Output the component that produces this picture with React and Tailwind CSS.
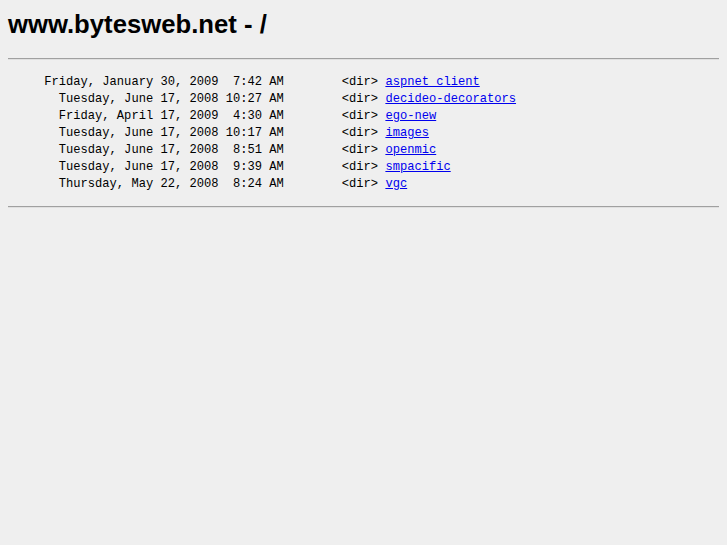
const entries = [
  ["Friday, January 30, 2009", "7:42 AM", "aspnet_client"],
  ["Tuesday, June 17, 2008", "10:27 AM", "decideo-decorators"],
  ["Friday, April 17, 2009", "4:30 AM", "ego-new"],
  ["Tuesday, June 17, 2008", "10:17 AM", "images"],
  ["Tuesday, June 17, 2008", "8:51 AM", "openmic"],
  ["Tuesday, June 17, 2008", "9:39 AM", "smpacific"],
  ["Thursday, May 22, 2008", "8:24 AM", "vgc"],
];

export default function App() {
  return (
    <div className="min-h-[545px] bg-[#efefef] p-2 text-black">
      <h1 className="font-['Liberation_Sans',Arial,sans-serif] text-[25.7px] font-bold leading-[30px] pt-[1px] pb-[19px]">
        www.bytesweb.net - /
      </h1>
      <hr className="border-0 border-t border-t-[#a0a0a0] border-b border-b-[#e0e0e0]" />
      <pre className="font-['Liberation_Mono','Courier_New',monospace] text-[12.1px] leading-[17px] pt-[14px] pb-[13px]">
        {entries.map(([date, time, name]) => (
          <div key={name}>
            {date.padStart(29, " ") + " " + time.padStart(8, " ") + "        <dir> "}
            <a href="#" className="text-[#0000ee] underline">
              {name}
            </a>
          </div>
        ))}
      </pre>
      <hr className="border-0 border-t border-t-[#a0a0a0] border-b border-b-[#e0e0e0]" />
    </div>
  );
}
